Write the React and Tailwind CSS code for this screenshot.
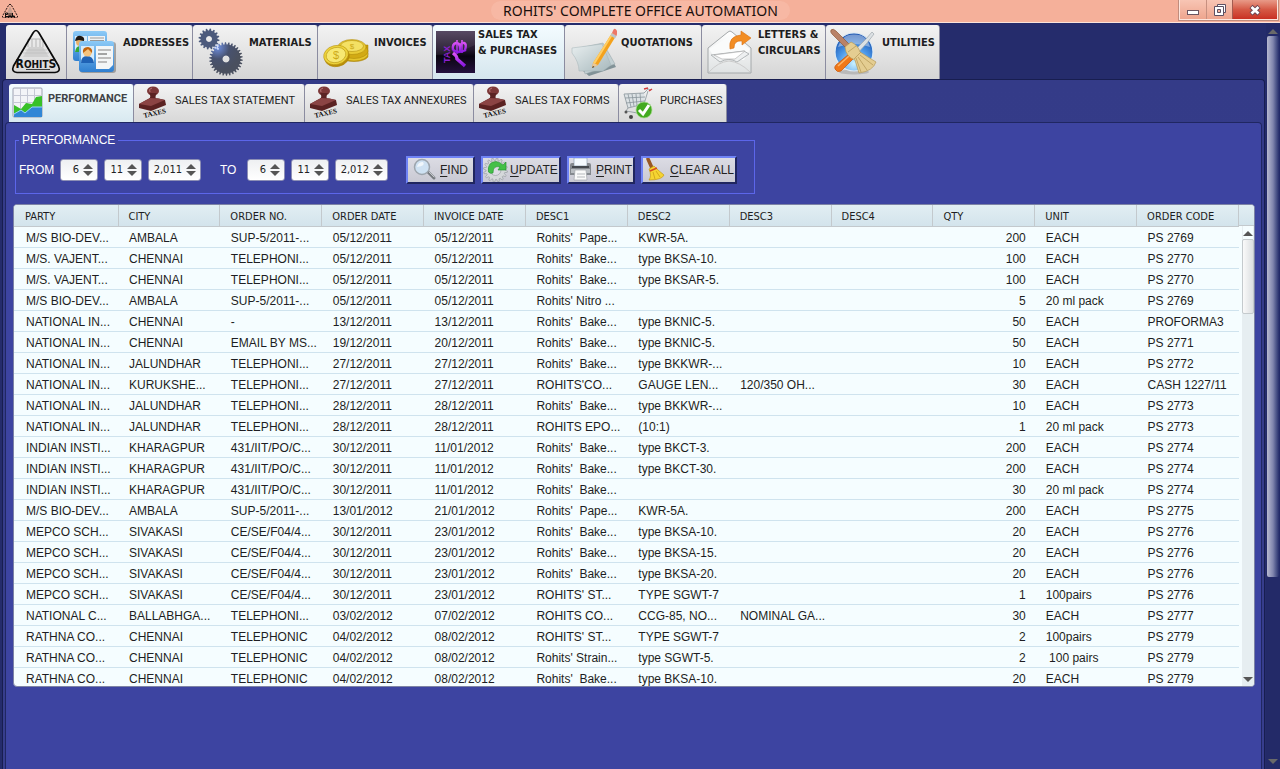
import React from "react";

const HEADERS = ["PARTY", "CITY", "ORDER NO.", "ORDER DATE", "INVOICE DATE", "DESC1", "DESC2", "DESC3", "DESC4", "QTY", "UNIT", "ORDER CODE"];

const ROWS = [
  ["M/S BIO-DEV...", "AMBALA", "SUP-5/2011-...", "05/12/2011", "05/12/2011", "Rohits'  Pape...", "KWR-5A.", "", "", "200", "EACH", "PS 2769"],
  ["M/S. VAJENT...", "CHENNAI", "TELEPHONI...", "05/12/2011", "05/12/2011", "Rohits'  Bake...", "type BKSA-10.", "", "", "100", "EACH", "PS 2770"],
  ["M/S. VAJENT...", "CHENNAI", "TELEPHONI...", "05/12/2011", "05/12/2011", "Rohits'  Bake...", "type BKSAR-5.", "", "", "100", "EACH", "PS 2770"],
  ["M/S BIO-DEV...", "AMBALA", "SUP-5/2011-...", "05/12/2011", "05/12/2011", "Rohits' Nitro ...", "", "", "", "5", "20 ml pack", "PS 2769"],
  ["NATIONAL IN...", "CHENNAI", "-", "13/12/2011", "13/12/2011", "Rohits'  Bake...", "type BKNIC-5.", "", "", "50", "EACH", "PROFORMA3"],
  ["NATIONAL IN...", "CHENNAI", "EMAIL BY MS...", "19/12/2011", "20/12/2011", "Rohits'  Bake...", "type BKNIC-5.", "", "", "50", "EACH", "PS 2771"],
  ["NATIONAL IN...", "JALUNDHAR", "TELEPHONI...", "27/12/2011", "27/12/2011", "Rohits'  Bake...", "type BKKWR-...", "", "", "10", "EACH", "PS 2772"],
  ["NATIONAL IN...", "KURUKSHE...", "TELEPHONI...", "27/12/2011", "27/12/2011", "ROHITS'CO...", "GAUGE LEN...", "120/350 OH...", "", "30", "EACH", "CASH 1227/11"],
  ["NATIONAL IN...", "JALUNDHAR", "TELEPHONI...", "28/12/2011", "28/12/2011", "Rohits'  Bake...", "type BKKWR-...", "", "", "10", "EACH", "PS 2773"],
  ["NATIONAL IN...", "JALUNDHAR", "TELEPHONI...", "28/12/2011", "28/12/2011", "ROHITS EPO...", "(10:1)", "", "", "1", "20 ml pack", "PS 2773"],
  ["INDIAN INSTI...", "KHARAGPUR", "431/IIT/PO/C...", "30/12/2011", "11/01/2012", "Rohits'  Bake...", "type BKCT-3.", "", "", "200", "EACH", "PS 2774"],
  ["INDIAN INSTI...", "KHARAGPUR", "431/IIT/PO/C...", "30/12/2011", "11/01/2012", "Rohits'  Bake...", "type BKCT-30.", "", "", "200", "EACH", "PS 2774"],
  ["INDIAN INSTI...", "KHARAGPUR", "431/IIT/PO/C...", "30/12/2011", "11/01/2012", "Rohits'  Bake...", "", "", "", "30", "20 ml pack", "PS 2774"],
  ["M/S BIO-DEV...", "AMBALA", "SUP-5/2011-...", "13/01/2012", "21/01/2012", "Rohits'  Pape...", "KWR-5A.", "", "", "200", "EACH", "PS 2775"],
  ["MEPCO SCH...", "SIVAKASI", "CE/SE/F04/4...", "30/12/2011", "23/01/2012", "Rohits'  Bake...", "type BKSA-10.", "", "", "20", "EACH", "PS 2776"],
  ["MEPCO SCH...", "SIVAKASI", "CE/SE/F04/4...", "30/12/2011", "23/01/2012", "Rohits'  Bake...", "type BKSA-15.", "", "", "20", "EACH", "PS 2776"],
  ["MEPCO SCH...", "SIVAKASI", "CE/SE/F04/4...", "30/12/2011", "23/01/2012", "Rohits'  Bake...", "type BKSA-20.", "", "", "20", "EACH", "PS 2776"],
  ["MEPCO SCH...", "SIVAKASI", "CE/SE/F04/4...", "30/12/2011", "23/01/2012", "ROHITS' ST...", "TYPE SGWT-7", "", "", "1", "100pairs", "PS 2776"],
  ["NATIONAL C...", "BALLABHGA...", "TELEPHONI...", "03/02/2012", "07/02/2012", "ROHITS CO...", "CCG-85, NO...", "NOMINAL GA...", "", "30", "EACH", "PS 2777"],
  ["RATHNA CO...", "CHENNAI", "TELEPHONIC", "04/02/2012", "08/02/2012", "ROHITS' ST...", "TYPE SGWT-7", "", "", "2", "100pairs", "PS 2779"],
  ["RATHNA CO...", "CHENNAI", "TELEPHONIC", "04/02/2012", "08/02/2012", "Rohits' Strain...", "type SGWT-5.", "", "", "2", " 100 pairs", "PS 2779"],
  ["RATHNA CO...", "CHENNAI", "TELEPHONIC", "04/02/2012", "08/02/2012", "Rohits'  Bake...", "type BKSA-10.", "", "", "20", "EACH", "PS 2779"],
];

function gearPath(cx, cy, outer, inner, teeth) {
  const points = [];
  for (let i = 0; i < teeth; i++) {
    const step = (Math.PI * 2) / teeth;
    const a = i * step;
    [[0, inner], [0.2, outer], [0.5, outer], [0.7, inner]].forEach(([t, r]) => {
      points.push(`${(cx + Math.cos(a + t * step) * r).toFixed(2)} ${(cy + Math.sin(a + t * step) * r).toFixed(2)}`);
    });
  }
  return `M${points.join("L")}Z`;
}

function LogoIcon() {
  return (
    <svg viewBox="0 0 50 46" className="h-[46px] w-[50px] shrink-0" aria-hidden="true">
      <path d="M18 18H32L38 28H12Z" fill="#d0d0d0" />
      <path d="M12 24H38M14 21H36" stroke="#bdbdbd" strokeWidth=".7" />
      <path d="M17 18V10h4v8m0-8h4v8m0-8h4v8m0-8h3v8" fill="none" stroke="#b5b5b5" />
      <path d="M22 4Q25 -1 28 4L47.500 37Q50 43 44 43.500H6Q0 43 2.500 37Z" fill="none" stroke="#0a0a0a" strokeWidth="1.700" />
      <text x="25" y="39" textAnchor="middle" fontSize="10" fontWeight="700" fill="#111" fontFamily="'DejaVu Sans Condensed', 'DejaVu Sans', sans-serif"><tspan fontSize="12">R</tspan>OHIT<tspan fontSize="12">S</tspan></text>
      <path d="M15 40.500H39" stroke="#111" strokeWidth=".8" />
    </svg>
  );
}

function SmallLogo() {
  return (
    <svg viewBox="0 0 18 16" className="h-4 w-[18px]" aria-hidden="true">
      <path d="M9 3L12 10H6Z" fill="#c9a090" />
      <path d="M8 1.500h2L16.500 13Q17 14.500 15.500 14.500h-13Q1 14.500 1.500 13Z" fill="none" stroke="#2b1b18" strokeDasharray="2 1" />
      <path d="M4.500 10v3M4.500 10h2v1.500h-2M8 10v3h2v-3M11.500 10v3h2M4 13.500h10" fill="none" stroke="#111" />
    </svg>
  );
}

function CardsIcon() {
  return (
    <svg viewBox="0 0 48 48" className="size-12 shrink-0" aria-hidden="true">
      <defs>
        <linearGradient id="card" x1="0" y1="0" x2="0" y2="1"><stop offset="0" stopColor="#8ccaf7" /><stop offset="1" stopColor="#2f7fd0" /></linearGradient>
      </defs>
      <rect x="2" y="3" width="34" height="30" rx="3" fill="url(#card)" />
      <rect x="17" y="8" width="17" height="12" fill="#eef2f5" />
      <path d="M19 10h14M19 12.500h14" stroke="#999" />
      <rect x="4" y="8" width="12" height="16" fill="#d8ecfa" />
      <path d="M4 24Q5 17 10 18L14 24Z" fill="#35a83a" />
      <circle cx="9" cy="14" r="4" fill="#e8b26a" />
      <path d="M4 13Q5 7 10 8Q14 9 13 13L8 12Z" fill="#1d1712" />
      <rect x="9" y="14" width="36" height="31" rx="3" fill="#555" opacity=".45" />
      <rect x="8" y="13" width="35" height="31" rx="3" fill="url(#card)" />
      <path d="M25 18h17v19l-4 4H25Z" fill="#f4f6f7" />
      <path d="M27 22h13M27 30h13M27 34h9" stroke="#aaa" strokeWidth="1.500" />
      <path d="M27 26h9" stroke="#888" strokeWidth="1.500" />
      <rect x="10" y="18" width="13" height="17" fill="#d7ecfb" />
      <path d="M10 35Q10 28 16 28Q22 28 23 35Z" fill="#1f62b5" />
      <circle cx="16.500" cy="24" r="4.500" fill="#f4c27d" />
      <path d="M12 25Q11 19 17 19Q22 20 21 25L17 21Z" fill="#c2640e" />
    </svg>
  );
}

function GearsIcon() {
  return (
    <svg viewBox="0 0 48 48" className="size-12 shrink-0" aria-hidden="true">
      <defs>
        <radialGradient id="gearGlow" cx=".25" cy=".15" r=".7"><stop offset="0" stopColor="#6f8fe0" /><stop offset=".5" stopColor="#48526f" /><stop offset="1" stopColor="#4a505f" /></radialGradient>
      </defs>
      <path d={`${gearPath(12, 11, 10.5, 8.5, 16)}M12 8a3 3 0 1 0 .01 0Z`} fill="#4c5a7c" fillRule="evenodd" />
      <path d={`${gearPath(29, 31, 16.8, 14.5, 30)}M29 27.500a3.500 3.500 0 1 0 .01 0Z`} fill="url(#gearGlow)" fillRule="evenodd" />
      <path d="M17 19l5 2M20 16l1 6" stroke="#cfdcff" />
    </svg>
  );
}

function CoinsIcon() {
  return (
    <svg viewBox="0 0 48 48" className="size-12 shrink-0" aria-hidden="true">
      <g fill="#d4a80f" stroke="#ab8508" strokeWidth=".5">
        <path d="M18 17v12a15 7 0 0 0 28 0V17Z" fill="#c79c0c" />
        <ellipse cx="32" cy="26" rx="14" ry="7" fill="#e5c52c" />
        <ellipse cx="32" cy="23" rx="14" ry="7.500" fill="#d2aa14" />
        <ellipse cx="30" cy="19" rx="14" ry="7.500" fill="#e9cb35" />
        <ellipse cx="30" cy="18" rx="11.500" ry="5.500" fill="#f4e164" />
        <ellipse cx="15" cy="29" rx="12.500" ry="9.500" fill="#b98e0a" transform="rotate(-14 15 29)" />
        <ellipse cx="14" cy="27" rx="12.500" ry="9.500" fill="#efd53d" transform="rotate(-14 14 27)" />
        <ellipse cx="14" cy="27" rx="10" ry="7.500" fill="#f7e872" transform="rotate(-14 14 27)" />
      </g>
      <text x="14" y="31" textAnchor="middle" fontSize="11" fill="#cda817" fontFamily="Liberation Sans, sans-serif">$</text>
      <text x="30" y="21" textAnchor="middle" fontSize="8" fill="#cda817" fontFamily="Liberation Sans, sans-serif">$</text>
    </svg>
  );
}

function RupeeIcon() {
  return (
    <svg viewBox="0 0 39 42" className="h-[42px] w-[39px] shrink-0" aria-hidden="true">
      <defs>
        <linearGradient id="rupeeBg" x1="0" y1="0" x2="0" y2="1"><stop offset="0" stopColor="#4b3c58" /><stop offset=".45" stopColor="#21172b" /><stop offset=".6" stopColor="#090510" /><stop offset="1" stopColor="#25103e" /></linearGradient>
        <linearGradient id="rupeeInk" x1="0" y1="0" x2="0" y2="1"><stop offset="0" stopColor="#dc55f5" /><stop offset="1" stopColor="#8716df" /></linearGradient>
      </defs>
      <rect width="39" height="42" fill="url(#rupeeBg)" />
      <path d="M0 24Q20 24 39 14V0H0Z" fill="#fff" opacity=".07" />
      <path d="M17 19Q16 13 20 12Q24 12 24 17V20M24 17Q25 11 28 12Q31 13 29 19M17 19Q22 23 30 19" fill="none" stroke="url(#rupeeInk)" strokeWidth="2.400" />
      <path d="M21 9V23M26 9V22" stroke="url(#rupeeInk)" strokeWidth="1.600" />
      <path d="M17 22Q21 25 21 28L29 35" fill="none" stroke="url(#rupeeInk)" strokeWidth="3.400" />
      <text x="0" y="0" transform="translate(14 32) rotate(-90)" fontSize="9" fontWeight="700" fill="#8d1fd0" fontFamily="Liberation Sans, sans-serif">TAX</text>
    </svg>
  );
}

function PencilIcon() {
  return (
    <svg viewBox="0 0 48 48" className="size-12 shrink-0" aria-hidden="true">
      <defs>
        <linearGradient id="sheet" x1="0" y1="0" x2="1" y2="1"><stop offset="0" stopColor="#e9eff0" /><stop offset="1" stopColor="#a8b9bd" /></linearGradient>
      </defs>
      <path d="M14 43L40 26L47 39L20 48Z" fill="#819297" />
      <path d="M10 20L34 15L46 36L16 46Z" fill="#c2cfd2" stroke="#98a7ab" strokeWidth=".5" />
      <path d="M3 20L33 16L42 37L34 43L10 43Q10 34 3 25Z" fill="url(#sheet)" stroke="#a2b2b6" strokeWidth=".5" />
      <path d="M24 35L43 5L47 8L29 37L23 40Z" fill="#f4a21d" />
      <path d="M24 35L43 5L44.500 6L26 36Z" fill="#ffce65" />
      <path d="M24 35L29 37L23 40Z" fill="#e9c89c" />
      <path d="M24 38L23 40L25.500 39Z" fill="#333" />
      <path d="M41.500 7.500L43 5L47.500 8L46 10.500Z" fill="#bcc5ca" />
      <path d="M43 5Q45 -1 47 1.500Q49 3 47.500 8Z" fill="#ed7868" />
    </svg>
  );
}

function EnvelopeIcon() {
  return (
    <svg viewBox="0 0 48 48" className="size-12 shrink-0" aria-hidden="true">
      <defs>
        <linearGradient id="envelope" x1="0" y1="0" x2="0" y2="1"><stop offset="0" stopColor="#fff" /><stop offset="1" stopColor="#dfe2e3" /></linearGradient>
      </defs>
      <path d="M2 20L22 4Q24 2 26 4L45 20V45H2Z" fill="url(#envelope)" stroke="#a4a8aa" />
      <path d="M3 21L24 8L44 21L38 32H10Z" fill="#fafbfb" />
      <path d="M5 27L38 23L43 26L31 34Q23 29 14 34Z" fill="#eef0f1" stroke="#b1b5b7" />
      <path d="M8 27L39 23L29 31H16Z" fill="#fff" stroke="#aaa" strokeWidth=".6" />
      <path d="M3 44Q12 34 23 33Q34 34 44 44" fill="none" stroke="#ccc" />
      <path d="M24 21Q22 8 35 7V3L45 10L36 17V13Q28 12 28 20Z" fill="#f28d24" stroke="#d86e10" strokeWidth=".6" />
    </svg>
  );
}

function UtilitiesIcon() {
  return (
    <svg viewBox="0 0 48 48" className="size-12 shrink-0" aria-hidden="true">
      <defs>
        <radialGradient id="globe" cx=".5" cy=".8" r=".75"><stop offset="0" stopColor="#c9f1ff" /><stop offset=".55" stopColor="#4b98e8" /><stop offset="1" stopColor="#1b54b0" /></radialGradient>
      </defs>
      <ellipse cx="24" cy="44" rx="15" ry="2.500" fill="#999" opacity=".5" />
      <circle cx="24" cy="24" r="19" fill="url(#globe)" stroke="#dceaf5" strokeWidth="1.200" />
      <path d="M8 19Q12 6 24 6.500Q37 6 40 19Q24 13 8 19Z" fill="#fff" opacity=".4" />
      <path d="M42 4L44 6L37 15L25 28L22 25L36 11Z" fill="#dce1e4" stroke="#9fa8ae" strokeWidth=".7" />
      <path d="M19 26L24 30L11 43Q7 45 5 41Q4 39 6 37Z" fill="#f07818" stroke="#c65409" strokeWidth=".7" />
      <path d="M8 38L19 28" stroke="#ffb665" strokeWidth="1.500" />
      <path d="M1 2Q3 0 6 3L21 18L17 21L2 6Q0 4 1 2Z" fill="#b98267" stroke="#8e5a38" strokeWidth=".7" />
      <path d="M15 19L21 14Q28 17 30 24L46 34Q43 43 29 45L25 32Q16 29 15 19Z" fill="#e4cd91" stroke="#b69b59" strokeWidth=".7" />
      <path d="M18 24L26 18M24 31L31 24M26 30L31 44M28 29L37 42M30 27L43 37" stroke="#b69b59" strokeWidth=".8" fill="none" />
    </svg>
  );
}

function ChartIcon() {
  return (
    <svg viewBox="0 0 32 32" className="size-8 shrink-0" aria-hidden="true">
      <rect x="1" y="1" width="29" height="29" rx="1" fill="#f3f4f8" stroke="#888da0" strokeWidth=".8" />
      <path d="M8.500 1v29M15.500 1v29M22.500 1v29M1 8.500h29M1 15.500h29" stroke="#c5c8d5" />
      <path d="M2 18L9 22L14 16L20 17L24 10L30 9V30H2Z" fill="#38c128" />
      <path d="M2 30V27L9 23L13 26L20 20L30 20V30Z" fill="#3187d6" />
      <path d="M2 27L9 23L13 26L20 20L30 20" fill="none" stroke="#99d3fb" />
    </svg>
  );
}

function StampIcon() {
  return (
    <svg viewBox="0 0 32 34" className="h-[34px] w-8 shrink-0" aria-hidden="true">
      <ellipse cx="16" cy="5" rx="6" ry="4.500" fill="#7d3838" />
      <path d="M12 7H20Q17 11 20 15L15 18L11 14Q15 11 12 7Z" fill="#5b2323" />
      <path d="M2 18L13 12Q22 12 28 14L29 19L14 25L2 22Z" fill="#5b2222" />
      <path d="M2 18L13 12Q22 12 28 14L14 20Z" fill="#8b4444" />
      <path d="M13 6Q11 3 15 2" fill="none" stroke="#b77676" />
      <text x="0" y="0" transform="translate(7 32) rotate(-13)" fontSize="7" fontWeight="700" fill="#111" fontFamily="Liberation Serif, serif">TAXES</text>
    </svg>
  );
}

function CartIcon() {
  return (
    <svg viewBox="0 0 32 34" className="h-[34px] w-8 shrink-0" aria-hidden="true">
      <path d="M2 8L22 7L23 18L6 22Z" fill="#dce2e5" />
      <path d="M2 8L22 7L26 3L29 4M2 8L6 22L22 18L26 5M3 12L23 11M4 17L23 15M6 8L9 21M10 8L12 20M14 8L15 20M18 7L19 19M6 22L4 25L21 28" fill="none" stroke="#89949b" strokeWidth=".8" />
      <path d="M22 3L26 2M27 5L30 3" stroke="#d13a3a" strokeWidth="1.500" />
      <circle cx="4" cy="26" r="1.500" fill="#555" /><circle cx="9" cy="31" r="2" fill="#444" />
      <circle cx="22" cy="24" r="8" fill="#42aa1f" stroke="#a8dc8e" strokeWidth=".7" />
      <path d="M17 24L21 28L27 19" fill="none" stroke="#fff" strokeWidth="3" />
    </svg>
  );
}

function FindIcon() {
  return (
    <svg viewBox="0 0 26 26" className="size-[26px] shrink-0" aria-hidden="true">
      <path d="M16 15L22 21" stroke="#777b80" strokeWidth="3" strokeLinecap="round" />
      <path d="M17 15L22 20" stroke="#c5c8cc" strokeLinecap="round" />
      <circle cx="10" cy="10" r="7.500" fill="#cee1f2" stroke="#9da5ad" strokeWidth="1.500" />
      <path d="M5 10Q6 5 11 5Q14 9 5 10Z" fill="#fff" opacity=".7" />
    </svg>
  );
}

function UpdateIcon() {
  return (
    <svg viewBox="0 0 26 26" className="size-[26px] shrink-0" aria-hidden="true">
      <path d={gearPath(12.5, 13, 12, 9.5, 16)} fill="#d5d8da" stroke="#9a9fa3" strokeWidth=".7" />
      <circle cx="12.500" cy="13" r="5.500" fill="#dedce5" stroke="#9ca2a6" strokeWidth=".7" />
      <path d="M5.500 15Q4 5 13 4.500Q17 5 20 8L23 5V13H15L17 10Q10 8 10 16Q7 17 5.500 15Z" fill="#45c048" stroke="#1e8e2c" strokeWidth=".6" />
    </svg>
  );
}

function PrintIcon() {
  return (
    <svg viewBox="0 0 26 26" className="size-[26px] shrink-0" aria-hidden="true">
      <rect x="5" y="1" width="13" height="8" fill="#f5faff" stroke="#91a2b2" strokeWidth=".7" />
      <path d="M1 8Q1 6 3 6H5V9H18V6H20Q22 6 22 8V18H1Z" fill="#84888e" />
      <path d="M3 9H20V11H3Z" fill="#44484e" />
      <path d="M2 12H21V16H2Z" fill="#b9bdc2" />
      <path d="M6 13H17L18 23H5Z" fill="#fafafa" stroke="#a2a5aa" strokeWidth=".7" />
      <path d="M8 17h8M8 20h8" stroke="#b5b8bc" />
    </svg>
  );
}

function BroomIcon() {
  return (
    <svg viewBox="0 0 26 26" className="size-[26px] shrink-0" aria-hidden="true">
      <path d="M5 2L9 11" stroke="#985824" strokeWidth="3.500" strokeLinecap="round" />
      <path d="M6 12L11 9L15 13L21 18Q19 23 6 23Q9 19 6 12Z" fill="#f5d432" stroke="#c69a15" strokeWidth=".7" />
      <path d="M7 14L14 11" stroke="#d54a22" strokeWidth="1.500" />
      <path d="M10 15L12 22M13 14L17 20" stroke="#d2aa1c" />
    </svg>
  );
}

const MAIN_TABS = [
  { label: "Rohits", icon: LogoIcon, width: "w-[61px]", iconOnly: true },
  { label: "ADDRESSES", icon: CardsIcon, width: "w-[126px]" },
  { label: "MATERIALS", icon: GearsIcon, width: "w-[125px]" },
  { label: "INVOICES", icon: CoinsIcon, width: "w-[115px]" },
  { label: "SALES TAX\n& PURCHASES", icon: RupeeIcon, width: "w-[132px]", active: true },
  { label: "QUOTATIONS", icon: PencilIcon, width: "w-[137px]" },
  { label: "LETTERS &\nCIRCULARS", icon: EnvelopeIcon, width: "w-[124px]" },
  { label: "UTILITIES", icon: UtilitiesIcon, width: "w-[114px]" },
];

const SUB_TABS = [
  { label: "PERFORMANCE", icon: ChartIcon, width: "w-[125px]", active: true },
  { label: "SALES TAX STATEMENT", icon: StampIcon, width: "w-[171px]" },
  { label: "SALES TAX ANNEXURES", icon: StampIcon, width: "w-[169px]" },
  { label: "SALES TAX FORMS", icon: StampIcon, width: "w-[145px]" },
  { label: "PURCHASES", icon: CartIcon, width: "w-[108px]" },
];

function MainTab({ tab }) {
  const Icon = tab.icon;
  const fill = tab.active ? "from-[#f4fcff] to-[#d5e6ee]" : "from-[#f3f3f3] to-[#d5d5d5]";
  return (
    <button type="button" role="tab" aria-selected={!!tab.active} aria-label={tab.iconOnly ? tab.label : undefined} className={`flex h-[54px] shrink-0 items-center border-r border-[#8b8ca0] bg-linear-to-b ${fill} ${tab.width} rounded-t-[3px] ${tab.iconOnly ? "pl-[5px]" : tab.active ? "gap-[3px] pl-[3px]" : "gap-1 pl-1"}`}>
      <Icon />
      {!tab.iconOnly && (
        <span className="mt-[2px] flex h-8 items-center self-start text-left font-['DejaVu_Sans_Condensed','DejaVu_Sans',sans-serif] text-[11px] leading-4 font-bold whitespace-pre text-[#1c1c20]">{tab.label}</span>
      )}
    </button>
  );
}

function SubTab({ tab }) {
  const Icon = tab.icon;
  const fill = tab.active ? "from-[#f6fdff] to-[#d8e9f0] font-bold text-[#3f4347]" : "from-[#f3f3f3] to-[#d8d8d8] text-[#222]";
  return (
    <button type="button" role="tab" aria-selected={!!tab.active} className={`flex h-[38px] shrink-0 items-center border-r border-[#8b8ca0] bg-linear-to-b pl-[3px] font-[Roboto,sans-serif] text-[11px] leading-4 whitespace-nowrap rounded-t-[3px] ${fill} ${tab.width} ${tab.active ? "gap-1" : "gap-[6px]"}`}>
      <Icon />
      <span className={tab.active ? "mb-2" : "mb-1"}>{tab.label}</span>
    </button>
  );
}

function Arrow({ down }) {
  return (
    <svg viewBox="0 0 10 5" className="h-[5px] w-[10px]" aria-hidden="true">
      <path d={down ? "M0 0H10L5 5Z" : "M0 5H10L5 0Z"} fill="currentColor" />
    </svg>
  );
}

function Spinner({ label, value, wide }) {
  return (
    <span className={`flex h-[22px] items-center rounded-[3px] border border-[#8d8fb5] bg-linear-to-b from-[#eef0f2] to-white pr-1 ${wide ? "w-[53px]" : "w-[38px]"}`}>
      <input type="text" aria-label={label} defaultValue={value} className="w-0 min-w-0 flex-1 bg-transparent pr-[4px] text-right font-['DejaVu_Sans_Condensed','DejaVu_Sans',sans-serif] text-[11px] text-[#222] outline-none" />
      <span className="flex flex-col gap-[2px] text-[#555]">
        <button type="button" aria-label={`Increase ${label}`} className="flex"><Arrow /></button>
        <button type="button" aria-label={`Decrease ${label}`} className="flex"><Arrow down /></button>
      </span>
    </span>
  );
}

function DateFields({ label, year }) {
  return (
    <div className="flex items-center gap-[6px]">
      <Spinner label={`${label} day`} value="6" />
      <Spinner label={`${label} month`} value="11" />
      <Spinner label={`${label} year`} value={year} wide />
    </div>
  );
}

function ActionButton({ icon: Icon, label, width }) {
  return (
    <button type="button" className={`flex h-7 items-center overflow-hidden border-2 border-t-[#6f83f5] border-r-[#20265f] border-b-[#20265f] border-l-[#6f83f5] bg-linear-to-b from-[#dcdce4] to-[#c9c9d3] text-[12px] text-[#222] ${width}`}>
      <Icon />
      <span className="whitespace-nowrap"><u className="underline-offset-2">{label[0]}</u>{label.slice(1)}</span>
    </button>
  );
}

function TitleBar() {
  return (
    <header className="flex h-[23px] items-start border-b border-[#fbe3da] bg-[#f5b09a]">
      <div className="flex w-[102px] pt-[3px] pl-px"><SmallLogo /></div>
      <h1 className="flex-1 text-center font-['Noto_Sans','Open_Sans',sans-serif] text-[14px] leading-[22px] text-[#1a0f0c]"><span className="rounded-full bg-[#fac6b3]/40 px-3">ROHITS' COMPLETE OFFICE AUTOMATION</span></h1>
      <div className="mr-[2px] flex h-5 border border-t-0 border-[#fde5dc] outline outline-[#c08c7c]">
        <button type="button" aria-label="Minimize" className="flex w-[27px] items-center justify-center border-r border-[#c79080] bg-linear-to-b from-[#f8c5b4] to-[#eea58e]">
          <svg viewBox="0 0 14 14" className="size-[14px]" aria-hidden="true"><rect x="1.500" y="7.500" width="11" height="4" fill="#fff" stroke="#6b5560" /></svg>
        </button>
        <button type="button" aria-label="Restore" className="flex w-[26px] items-center justify-center border-r border-[#a35b50] bg-linear-to-b from-[#f8c5b4] to-[#eea58e]">
          <svg viewBox="0 0 14 14" className="size-[14px]" aria-hidden="true"><path d="M4.500 1.500h8v8h-8Z" fill="#fff" stroke="#5d5062" /><path d="M1.500 3.500h9v9h-9Z" fill="#fff" stroke="#5d5062" /><path d="M4.500 6.500h3v3h-3Z" fill="#f3b49f" stroke="#5d5062" /></svg>
        </button>
        <button type="button" aria-label="Close" className="flex w-[44px] items-center justify-center bg-linear-to-b from-[#e89a88] via-[#d55845] to-[#c92f22]">
          <svg viewBox="0 0 14 14" className="size-[14px]" aria-hidden="true"><path d="M3 3.500L11 11M11 3.500L3 11" stroke="#6b4552" strokeWidth="4.500" /><path d="M3.500 4L10.500 10.500M10.500 4L3.500 10.500" stroke="#fff" strokeWidth="2.800" /></svg>
        </button>
      </div>
    </header>
  );
}

function OrdersTable() {
  return (
    <div className="flex h-[483px] overflow-hidden rounded-[4px] border border-[#7d83a5] bg-[#f5fdff]">
      <table className="w-full flex-1 table-fixed border-collapse self-start text-[12px] text-[#1d1d22]">
        <thead>
          <tr className="h-[21px] bg-linear-to-b from-[#e2eef3] to-[#d3e4ec] font-['DejaVu_Sans_Condensed','DejaVu_Sans',sans-serif] text-[11px]">
            {HEADERS.map((name, i) => (
              <th key={name} scope="col" className={`border-r border-b border-[#c3c9cd] px-0 pt-1 pb-0 text-left leading-4 font-normal whitespace-nowrap ${i === 0 ? "w-[104px] pl-[11px]" : "pl-[10px]"}`}>{name}</th>
            ))}
          </tr>
        </thead>
        <tbody>
          {ROWS.map((row, r) => (
            <tr key={r} className="h-[21px] border-b border-[#cfe3ee]">
              {row.map((cell, c) => (
                <td key={c} className={`overflow-hidden px-0 pt-[2px] pb-0 leading-[18px] whitespace-pre ${c === 9 ? "pr-[9px] text-right" : c === 0 ? "pl-3" : "pl-[11px]"}`}>{cell}</td>
              ))}
            </tr>
          ))}
        </tbody>
      </table>
      <div className="flex w-[15px] shrink-0 flex-col">
        <div className="h-[21px] border-b border-[#c3c9cd] bg-linear-to-b from-[#e2eef3] to-[#d3e4ec]" />
        <div className="ml-[3px] flex flex-1 flex-col items-center bg-[#e6eef1] text-[#555]">
          <button type="button" aria-label="Scroll table up" className="flex h-[13px] items-center bg-[#f5fdff] pt-px"><Arrow /></button>
          <div className="h-[75px] w-full rounded-[2px] border border-[#c4cacd] bg-linear-to-r from-[#fafafa] to-[#dcdfe1]" />
          <button type="button" aria-label="Scroll table down" className="mt-auto flex h-[13px] items-center"><Arrow down /></button>
        </div>
      </div>
    </div>
  );
}

export default function App() {
  return (
    <div className="flex min-h-screen flex-col bg-[#252c6c] font-['Liberation_Sans',Arial,sans-serif]">
      <TitleBar />
      <div className="flex flex-1">
        <main className="flex min-w-0 flex-1 flex-col pt-[2px] pr-[1px] pl-[2px]">
          <div role="tablist" aria-label="Sections" className="flex pl-1">
            {MAIN_TABS.map((tab) => <MainTab key={tab.label} tab={tab} />)}
          </div>
          <section className="flex flex-1 flex-col rounded-t-[4px] border border-b-0 border-[#181e50] bg-linear-to-b from-[#343b88] to-[#373e8d] px-[2px] pt-1">
            <div role="tablist" aria-label="Sales tax pages" className="flex pl-1">
              {SUB_TABS.map((tab) => <SubTab key={tab.label} tab={tab} />)}
            </div>
            <div className="flex-1 rounded-t-[4px] border border-b-0 border-[#202762] bg-[#3d44a1] pr-[6px] pl-[7px]">
              <form className="ml-[2px] flex pt-[9px]" onSubmit={(e) => e.preventDefault()}>
                <fieldset className="h-[62px] w-[740px] border border-[#5c66ea] pl-[3px]">
                  <legend className="px-[3px] text-[12px] leading-4 text-white">PERFORMANCE</legend>
                  <div className="mt-2 flex h-7 items-center">
                    <span className="w-[41px] text-[12px] text-white">FROM</span>
                    <DateFields label="From" year="2,011" />
                    <span className="ml-[19px] w-[27px] text-[12px] text-white">TO</span>
                    <DateFields label="To" year="2,012" />
                    <div className="ml-[18px] flex items-center gap-[6px]">
                      <ActionButton icon={FindIcon} label="FIND" width="w-[69px] pl-1 gap-[2px]" />
                      <ActionButton icon={UpdateIcon} label="UPDATE" width="w-[80px] gap-px" />
                      <ActionButton icon={PrintIcon} label="PRINT" width="w-[68px] gap-px" />
                      <ActionButton icon={BroomIcon} label="CLEAR ALL" width="w-[96px] gap-px" />
                    </div>
                  </div>
                </fieldset>
              </form>
              <div className="mt-[10px]"><OrdersTable /></div>
            </div>
          </section>
        </main>
        <div className="flex w-[14px] flex-col items-center bg-[#232a68] pt-1 pb-[3px] text-[#696969]">
          <button type="button" aria-label="Scroll page up" className="flex h-[9px] items-center"><Arrow /></button>
          <div className="w-3 flex-[541] rounded-[2px] bg-linear-to-r from-[#b8b9d0] via-[#8085ad] to-[#272e6b]" />
          <div className="flex-[180]" />
          <button type="button" aria-label="Scroll page down" className="flex h-[9px] items-center"><Arrow down /></button>
        </div>
      </div>
    </div>
  );
}
